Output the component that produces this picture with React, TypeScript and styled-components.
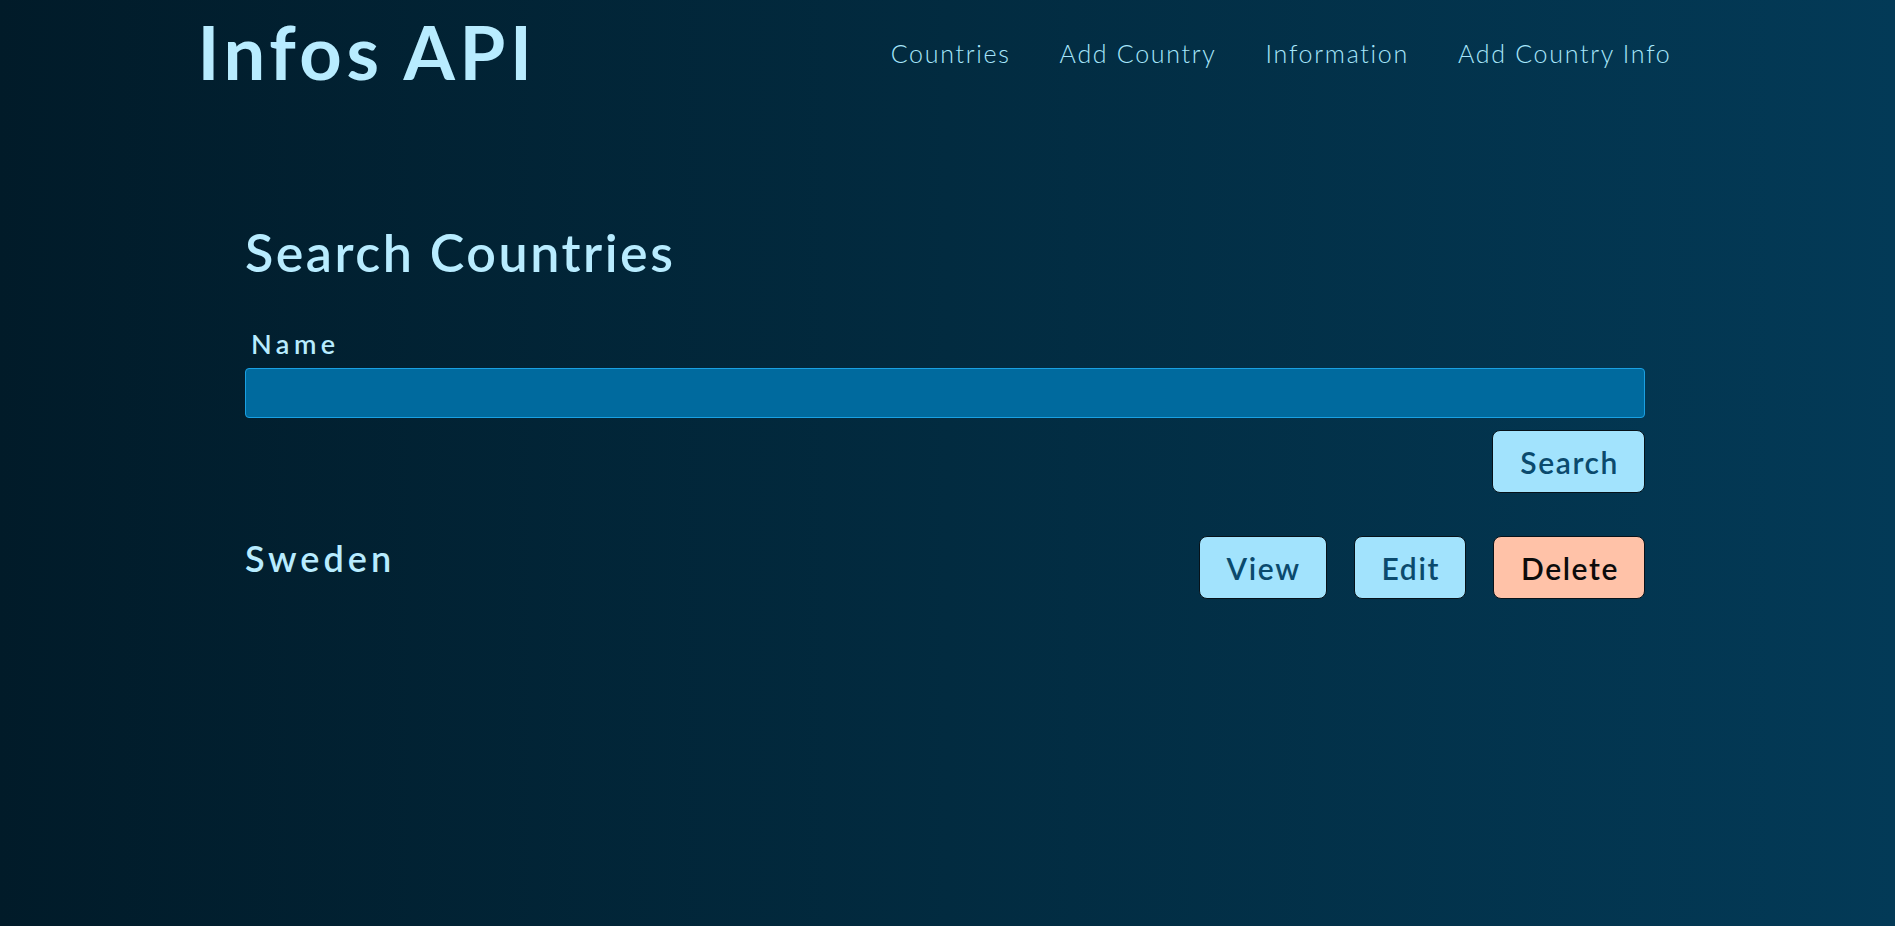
import React from "react";
import styled, { createGlobalStyle } from "styled-components";

const GlobalStyle = createGlobalStyle`
  html, body {
    margin: 0;
    padding: 0;
  }
  body {
    min-height: 100vh;
    background: linear-gradient(to right, #011b29 0%, #022b40 50%, #033a57 100%);
    font-family: Lato, "Noto Sans", sans-serif;
    color: #b6eafd;
  }
  * { box-sizing: border-box; }
`;

const Page = styled.div`
  min-height: 100vh;
  display: flex;
  flex-direction: column;
`;

const Header = styled.header`
  width: 1500px;
  margin: 0 auto;
  padding: 7px 26px 0 0;
  display: flex;
  justify-content: space-between;
  align-items: center;
`;

const Logo = styled.h1`
  margin: 0;
  font-size: 74px;
  font-weight: 700;
  line-height: normal;
  color: #b8ecff;
  letter-spacing: 4.6px;
`;

const Nav = styled.nav`
  display: flex;
  gap: 49px;
  padding-top: 3px;
`;

const NavLink = styled.a`
  font-size: 25px;
  font-weight: 300;
  letter-spacing: 1.7px;
  color: #a7e6fb;
  text-decoration: none;
  cursor: pointer;
`;

const Main = styled.main`
  width: 1400px;
  margin: 125px 0 0 calc(50% - 702.5px);
  display: flex;
  flex-direction: column;
`;

const Title = styled.h2`
  margin: 0;
  font-size: 52px;
  font-weight: 600;
  line-height: normal;
  letter-spacing: 2.5px;
  color: #b8ecff;
`;

const Form = styled.form`
  display: flex;
  flex-direction: column;
  margin-top: 44px;
`;

const Label = styled.label`
  font-size: 27px;
  font-weight: 600;
  line-height: normal;
  letter-spacing: 4.5px;
  padding-left: 6px;
  color: #b8ecff;
`;

const Input = styled.input`
  margin-top: 8px;
  height: 50px;
  width: 100%;
  background: #006a9e;
  border: 1px solid #1aa0e2;
  border-radius: 4px;
  color: #e8f8ff;
  font-family: inherit;
  font-size: 22px;
  padding: 0 12px;
  outline: none;
`;

const Actions = styled.div<{ $spaced?: boolean }>`
  display: flex;
  justify-content: flex-end;
  gap: 27px;
  margin-top: ${(p) => (p.$spaced ? "12px" : "0")};
`;

const Button = styled.button<{ $variant?: "primary" | "danger" }>`
  height: 63px;
  padding: 0 25px 0 27px;
  display: inline-flex;
  align-items: center;
  justify-content: center;
  border: 1px solid #06121a;
  border-radius: 8px;
  font-family: inherit;
  font-size: 30px;
  font-weight: 600;
  letter-spacing: 1.6px;
  cursor: pointer;
  background: ${(p) => (p.$variant === "danger" ? "#ffc2a8" : "#a2e3fd")};
  color: ${(p) => (p.$variant === "danger" ? "#0b0b0b" : "#0b4a6d")};
`;

const ResultRow = styled.div`
  display: flex;
  justify-content: space-between;
  align-items: flex-start;
  margin-top: 43px;
`;

const CountryName = styled.h3`
  margin: 0;
  font-size: 36px;
  font-weight: 600;
  line-height: normal;
  letter-spacing: 4px;
  color: #b8ecff;
`;

export default function App() {
  return (
    <Page>
      <GlobalStyle />
      <Header>
        <Logo>Infos API</Logo>
        <Nav>
          <NavLink>Countries</NavLink>
          <NavLink>Add Country</NavLink>
          <NavLink>Information</NavLink>
          <NavLink>Add Country Info</NavLink>
        </Nav>
      </Header>
      <Main>
        <Title>Search Countries</Title>
        <Form onSubmit={(e) => e.preventDefault()}>
          <Label htmlFor="name">Name</Label>
          <Input id="name" type="text" />
          <Actions $spaced>
            <Button type="submit">Search</Button>
          </Actions>
        </Form>
        <ResultRow>
          <CountryName>Sweden</CountryName>
          <Actions>
            <Button>View</Button>
            <Button>Edit</Button>
            <Button $variant="danger">Delete</Button>
          </Actions>
        </ResultRow>
      </Main>
    </Page>
  );
}
